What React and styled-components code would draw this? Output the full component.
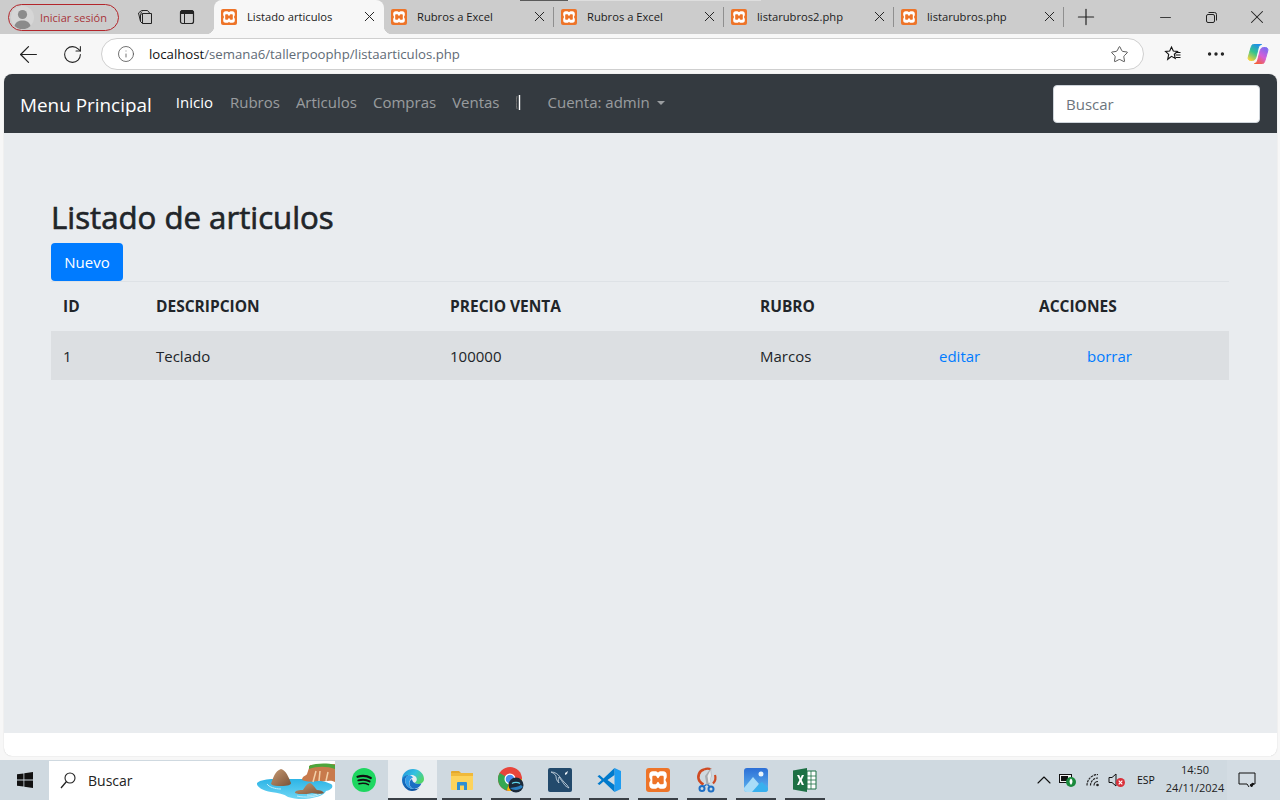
import React from "react";
import styled, { createGlobalStyle } from "styled-components";
import { ArrowLeft, RotateCw, Info, Star, X, Plus, Minus, ChevronUp, Ellipsis } from "lucide-react";

const UI_FONT = `"Open Sans", "Noto Sans", "Liberation Sans", sans-serif`;

const GlobalStyle = createGlobalStyle`
  html, body { margin: 0; padding: 0; height: 100%; }
  body { font-family: ${UI_FONT}; background: #f7f7f7; overflow: hidden; }
  * { box-sizing: border-box; }
`;

const Screen = styled.div`
  width: 1280px;
  height: 800px;
  display: flex;
  flex-direction: column;
  background: #f7f7f7;
`;

/* ---------- tab strip ---------- */
const TabStrip = styled.div`
  position: relative;
  height: 34px;
  flex: none;
  display: flex;
  align-items: center;
  background: #cccccc;
  padding-left: 8px;
`;

const StripIndicator = styled.div`
  position: absolute;
  top: 0;
  left: 520px;
  width: 241px;
  height: 1px;
  background: linear-gradient(to right, #5a5a5a 48px, #dedede 48px);
`;

const ProfileButton = styled.div`
  width: 111px;
  height: 27px;
  flex: none;
  display: flex;
  align-items: center;
  gap: 6px;
  padding-left: 2px;
  border: 1px solid #b3262b;
  border-radius: 14px;
  color: #a8343a;
  font-size: 11px;
  white-space: nowrap;
`;

const Avatar = styled.svg`
  width: 23px;
  height: 23px;
  flex: none;
`;

const StripIcon = styled.div`
  width: 42px;
  height: 34px;
  flex: none;
  display: flex;
  align-items: center;
  justify-content: center;
  margin-left: ${(p) => p.$offset || 0}px;
`;

const Tab = styled.div`
  position: relative;
  width: 170px;
  height: ${(p) => (p.$active ? "34px" : "28px")};
  flex: none;
  display: flex;
  align-items: center;
  padding: 0 6px 1px 7px;
  margin-left: ${(p) => p.$offset || 0}px;
  align-self: ${(p) => (p.$active ? "flex-end" : "center")};
  background: ${(p) => (p.$active ? "#f7f7f7" : "transparent")};
  border-radius: ${(p) => (p.$active ? "8px 8px 0 0" : "0")};
  font-size: 11.2px;
  color: #1c1c1c;
  ${(p) =>
    p.$divider &&
    `&::after {
      content: "";
      position: absolute;
      right: 0;
      top: 4px;
      height: 20px;
      width: 1px;
      background: #8f8f8f;
    }`}
  ${(p) =>
    p.$active &&
    `&::before, &::after {
      content: "";
      position: absolute;
      bottom: 0;
      width: 8px;
      height: 8px;
    }
    &::before {
      left: -8px;
      background: radial-gradient(circle at 0 0, transparent 8px, #f7f7f7 8.5px);
    }
    &::after {
      right: -8px;
      background: radial-gradient(circle at 100% 0, transparent 8px, #f7f7f7 8.5px);
    }`}
`;

const TabTitle = styled.span`
  flex: 1;
  margin-left: 10px;
  white-space: nowrap;
  overflow: hidden;
`;

const TabClose = styled(X)`
  flex: none;
  color: #222;
`;

const NewTab = styled.div`
  width: 44px;
  flex: none;
  display: flex;
  justify-content: center;
  color: #222;
`;

const WindowControls = styled.div`
  margin-left: auto;
  display: flex;
`;

const WindowButton = styled.div`
  width: 46px;
  height: 34px;
  display: flex;
  align-items: center;
  justify-content: center;
  color: #222;
`;

/* ---------- address bar ---------- */
const Toolbar = styled.div`
  height: 40px;
  flex: none;
  display: flex;
  align-items: center;
  background: #f7f7f7;
  padding-left: 6px;
`;

const ToolButton = styled.div`
  width: ${(p) => p.$w || 44}px;
  height: 32px;
  flex: none;
  display: flex;
  align-items: center;
  justify-content: center;
  color: #222;
`;

const AddressBar = styled.div`
  width: 1043px;
  height: 32px;
  flex: none;
  display: flex;
  align-items: center;
  margin-left: 7px;
  padding: 0 14px 0 15px;
  background: #fff;
  border: 1px solid #cfcfcf;
  border-radius: 16px;
  font-size: 13.2px;
`;

const Url = styled.div`
  flex: 1;
  margin-left: 14px;
  color: #5f6b76;
  white-space: nowrap;
  b { font-weight: 400; color: #111; }
`;

const ToolGroup = styled.div`
  display: flex;
  align-items: center;
  margin-left: 7px;
`;

/* ---------- page ---------- */
const Page = styled.div`
  margin: 0 3px 0 4px;
  height: 682px;
  flex: none;
  display: flex;
  flex-direction: column;
  background: #fff;
  border-radius: 8px;
  overflow: hidden;
  box-shadow: 0 0 1px #bbb;
`;

const Navbar = styled.nav`
  height: 59px;
  flex: none;
  display: flex;
  align-items: center;
  background: #343a40;
  padding: 0 17px 0 16px;
`;

const Brand = styled.div`
  font-size: 18.9px;
  color: #fff;
  margin: 2px 24px 0 0;
  white-space: nowrap;
`;

const NavLink = styled.a`
  font-size: 15px;
  color: ${(p) => (p.$active ? "#fff" : "rgba(255,255,255,.5)")};
  margin-right: ${(p) => (p.$active ? 17 : 16)}px;
  margin-top: -3px;
  white-space: nowrap;
`;

const Sliver = styled.svg`
  width: 5px;
  height: 15px;
  margin: -2px 27px 0 0;
  flex: none;
`;

const Caret = styled.span`
  display: inline-block;
  margin-left: 7px;
  vertical-align: 3px;
  border-top: 4.8px solid;
  border-left: 4.8px solid transparent;
  border-right: 4.8px solid transparent;
`;

const SearchInput = styled.div`
  width: 207px;
  height: 38px;
  margin-left: auto;
  display: flex;
  align-items: center;
  padding-left: 12px;
  background: #fff;
  border: 1px solid #ced4da;
  border-radius: 4px;
  color: #6c757d;
  font-size: 15px;
`;

const Content = styled.main`
  height: 600px;
  flex: none;
  background: #e9ecef;
  padding: 65px 47px 0;
`;

const Heading = styled.h2`
  margin: 0 0 6px;
  font-size: 31.2px;
  line-height: 39px;
  font-weight: 400;
  -webkit-text-stroke: 0.65px #212529;
  color: #212529;
`;

const PrimaryButton = styled.button`
  display: block;
  width: 72px;
  height: 38px;
  padding: 0;
  border: 0;
  border-radius: 4px;
  background: #007bff;
  color: #fff;
  font-family: inherit;
  font-size: 15px;
`;

const Table = styled.table`
  width: 1178px;
  table-layout: fixed;
  border-collapse: collapse;
  color: #212529;
  font-size: 15px;
`;

const Th = styled.th`
  height: 49px;
  padding: 0 12px 0;
  text-align: left;
  font-size: 15.5px;
  font-weight: 700;
  border-top: 1px solid #dee2e6;
  white-space: nowrap;
`;

const Tr = styled.tr`
  background: #dcdfe2;
`;

const Td = styled.td`
  height: 49px;
  padding: 1px 12px 0 ${(p) => p.$indent || 12}px;
  white-space: nowrap;
`;

const ActionLink = styled.a`
  color: #007bff;
`;

/* ---------- taskbar ---------- */
const Taskbar = styled.div`
  margin-top: 4px;
  height: 40px;
  flex: none;
  display: flex;
  align-items: stretch;
  background: #cfd9e0;
`;

const StartButton = styled.div`
  width: 49px;
  flex: none;
  display: flex;
  align-items: center;
  justify-content: center;
`;

const TaskSearch = styled.div`
  position: relative;
  width: 286px;
  flex: none;
  display: flex;
  align-items: center;
  gap: 12px;
  margin-top: 1px;
  padding-left: 11px;
  background: #fff;
  font-size: 14px;
  color: #222;
`;

const SearchArt = styled.svg`
  position: absolute;
  right: 0;
  bottom: 0;
  width: 80px;
  height: 39px;
`;

const TaskIcons = styled.div`
  display: flex;
  margin-left: 4px;
`;

const TaskButton = styled.div`
  position: relative;
  width: 49px;
  display: flex;
  align-items: center;
  justify-content: center;
  background: ${(p) => (p.$active ? "#e9edf0" : "transparent")};
  ${(p) =>
    p.$open &&
    `&::after {
      content: "";
      position: absolute;
      bottom: 0;
      height: 2px;
      left: ${p.$active ? 0 : 4.5}px;
      right: ${p.$active ? 0 : 4.5}px;
      background: #3a4046;
    }`}
`;

const Tray = styled.div`
  margin-left: auto;
  display: flex;
  align-items: center;
  color: #111;
`;

const TrayItem = styled.div`
  width: ${(p) => p.$w}px;
  display: flex;
  justify-content: center;
  align-items: center;
  font-size: ${(p) => p.$size || 11}px;
`;

const Clock = styled.div`
  width: 64px;
  margin-top: -2px;
  text-align: center;
  font-size: 11px;
  line-height: 18px;
  color: #222;
`;

const NotifyButton = styled.div`
  width: 53px;
  height: 40px;
  padding-right: 13px;
  display: flex;
  align-items: center;
  justify-content: center;
  background: #d3dce3;
`;

/* ---------- drawn icons ---------- */
const XamppIcon = ({ size = 16 }) => (
  <svg width={size} height={size} viewBox="0 0 16 16">
    <rect width="16" height="16" rx="2" fill="#ee7428" />
    <path
      d="M4.500 2.200h2c.8 0 1 .8 1.500.8s.7-.8 1.500-.8h2c1.300 0 2.300 1 2.300 2.300V6c0 .9-.8 1.200-.8 2s.8 1.100.8 2v1.500c0 1.300-1 2.300-2.300 2.300h-2c-.8 0-1-.8-1.500-.8s-.7.8-1.500.8h-2c-1.300 0-2.300-1-2.300-2.300V10c0-.9.8-1.200.8-2s-.8-1.100-.8-2V4.500c0-1.300 1-2.300 2.300-2.300z"
      fill="#fff"
    />
    <path
      d="M5 5.200h1.400c.7 0 1 1.700 1.600 1.700s.9-1.700 1.600-1.700H11c.5 0 .8.300.8.800v4c0 .5-.3.800-.8.800H9.600c-.7 0-1-1.700-1.600-1.700s-.9 1.700-1.600 1.700H5c-.5 0-.8-.3-.8-.8V6c0-.5.300-.8.800-.8z"
      fill="#ee7428"
    />
  </svg>
);

const WorkspacesIcon = () => (
  <svg width="18" height="18" viewBox="0 0 18 18" fill="none" stroke="#222" strokeWidth="1">
    <path d="M6.500 5.500h9v10h-9z" />
    <path d="M4.500 13.500 2.500 5l3-2.500h6L14 5.500" />
    <path d="M4.500 5.500 6 3.500" />
    <path d="M6.500 15.500l-2-2V6.500l2-1" />
  </svg>
);

const VerticalTabsIcon = () => (
  <svg width="16" height="16" viewBox="0 0 16 16" fill="none" stroke="#222">
    <rect x="1.500" y="1.500" width="13" height="13" rx="2" strokeWidth="1.200" />
    <path d="M1.500 3.500a2 2 0 0 1 2-2h9a2 2 0 0 1 2 2v1h-13z" fill="#222" />
    <path d="M5.500 4.500v10" />
  </svg>
);

const RestoreIcon = () => (
  <svg width="11" height="11" viewBox="0 0 11 11" fill="none" stroke="#222">
    <rect x=".5" y="2.500" width="8" height="8" rx="1.500" />
    <path d="M2.500 .5h6a2 2 0 0 1 2 2v6" />
  </svg>
);

const FavoritesIcon = () => (
  <svg width="18" height="18" viewBox="0 0 18 18" fill="none" stroke="#111" strokeWidth="1.100">
    <path d="M7.500 2 9.300 6l4.200.4-3.200 2.900 1 4.200-3.800-2.200-3.800 3 1-4.900L1.500 6.400 5.700 6z" />
    <path d="M12 7.500h4.500M11.500 10h5M12 12.500h4.500" />
  </svg>
);

const CopilotIcon = () => (
  <svg width="22" height="22" viewBox="0 0 22 22">
    <defs>
      <linearGradient id="cpA" x1="0.7" y1="0" x2="0.2" y2="1">
        <stop offset="0" stopColor="#1d8fe8" />
        <stop offset="0.5" stopColor="#35c48c" />
        <stop offset="1" stopColor="#f2d23a" />
      </linearGradient>
      <linearGradient id="cpB" x1="0.8" y1="0" x2="0.2" y2="1">
        <stop offset="0" stopColor="#7a6cf0" />
        <stop offset="0.5" stopColor="#d45fd8" />
        <stop offset="1" stopColor="#f5603a" />
      </linearGradient>
    </defs>
    <path d="M6.500 1.500h8c-2 .5-2.800 1.700-3.300 3.700L9 14c-.5 2.500-2 3.500-3.500 3.500h-2c-1.800 0-2.800-1.500-2.300-3.200L4 4.500C4.700 2.500 5 1.500 6.500 1.500z" fill="url(#cpA)" stroke="url(#cpA)" />
    <path d="M15.500 20.500h-8c2-.5 2.800-1.700 3.300-3.700L13 8c.5-2.500 2-3.500 3.500-3.500h2c1.800 0 2.800 1.500 2.300 3.200L18 17.500c-.7 2-1 3-2.500 3z" fill="url(#cpB)" stroke="url(#cpB)" />
  </svg>
);

const WindowsLogo = () => (
  <svg width="16" height="16" viewBox="0 0 16 16" fill="#111">
    <path d="M0 2.300 6.500 1.400v6.200H0zM7.300 1.300 16 0v7.600H7.300zM0 8.400h6.500v6.200L0 13.700zM7.300 8.400H16V16l-8.700-1.200z" />
  </svg>
);

const TaskSearchIcon = () => (
  <svg width="16" height="17" viewBox="0 0 16 17" fill="none" stroke="#222" strokeWidth="1.100">
    <circle cx="10" cy="6" r="5" />
    <path d="M6.500 9.500 1 16" strokeWidth="1.300" />
  </svg>
);

const IslandArt = () => (
  <SearchArt viewBox="0 0 80 39">
    <defs>
      <linearGradient id="water" x1="0" y1="0" x2="0" y2="1">
        <stop offset="0" stopColor="#2cb4e6" />
        <stop offset="1" stopColor="#6fd6f4" />
      </linearGradient>
      <linearGradient id="rock" x1="0" y1="0" x2="1" y2="1">
        <stop offset="0" stopColor="#c89a72" />
        <stop offset="1" stopColor="#7a5238" />
      </linearGradient>
    </defs>
    <path d="M2 22c3-3 11-4 16-4h28c10 0 22 1 30 5 3 2 1 6-5 7-2 4-8 6-14 7-8 2-18 1-24-1-4-3-10-4-17-5C9 30 1 26 2 22z" fill="url(#water)" />
    <path d="M12 23c2 3 8 5 14 5M42 35c8 2 18 1 24-2M52 34c4 .5 8 0 10-1" stroke="#c4eefa" fill="none" />
    <path d="M16 23c2-6 4-13 10-15 5 1 8 9 10 14 0 2-3 3-10 3-4 0-8 0-10-2z" fill="url(#rock)" />
    <path d="M47 19c0-4 4-4 5-6l3-9 25-1v18c-5-3-9 0-14-1-6 0-12 2-19-1z" fill="#c87a4c" />
    <path d="M54 5c8-3 18-3 26-1v4C72 5 62 5 54 8z" fill="#4ea53c" />
    <path d="M58 21l3-11M64 20l1-10M71 20l2-9" stroke="#f2cfa8" strokeWidth="1.500" />
    <path d="M40 32c0-3 5-3 8-3 2-3 4-7 7-7 3 1 5 5 7 7 3 0 6 1 7 3-1 1-8 1-12 0-3 1-8 1-9 1-3 0-6 0-8-1z" fill="url(#rock)" />
  </SearchArt>
);

const SpotifyIcon = () => (
  <svg width="24" height="24" viewBox="0 0 24 24">
    <circle cx="12" cy="12" r="12" fill="#1ed760" />
    <g fill="none" stroke="#111" strokeLinecap="round">
      <path d="M5.500 8.800c4.500-1.300 9.500-1 13.300 1.200" strokeWidth="2.200" />
      <path d="M6.300 12.400c4-1.100 8.200-.8 11.300 1" strokeWidth="1.900" />
      <path d="M7 15.700c3.300-.8 6.800-.6 9.500.9" strokeWidth="1.500" />
    </g>
  </svg>
);

const EdgeIcon = () => (
  <svg width="24" height="24" viewBox="0 0 24 24">
    <defs>
      <linearGradient id="edgeA" x1="0" y1="0" x2="1" y2="0.6">
        <stop offset="0" stopColor="#1f8fdc" />
        <stop offset="0.55" stopColor="#35c1e0" />
        <stop offset="1" stopColor="#52d66a" />
      </linearGradient>
      <linearGradient id="edgeB" x1="0" y1="0" x2="1" y2="1">
        <stop offset="0" stopColor="#1a78cc" />
        <stop offset="1" stopColor="#0c4c96" />
      </linearGradient>
    </defs>
    <path d="M1 12C1 5 6 1 12 1c6 0 11 4.500 11 10 0 3.500-3 5-5.500 5-2 0-3.500-.5-4-1.200 1.500-.8 2.300-2 2.300-3.300 0-2.800-2.500-4.500-5.300-4.500C6 7 1 9 1 12z" fill="url(#edgeA)" />
    <path d="M1 12c0-3.500 4-5 7-5-2.500 1-3.800 3.300-3.800 5.700 0 5 4.500 8.500 9 8.300 2 0 3.800-.5 5.300-1.300-2 2-4.500 3.300-7.500 3.300C6 23 1 18 1 12z" fill="url(#edgeB)" />
    <path d="M8 7c-2.500 1-3.800 3.300-3.800 5.700 0 5 4.500 8.500 9 8.300-3-.5-5-3-5-5.800 0-3 1.800-5 3.800-5.700C11 8 9.500 7 8 7z" fill="#2f9be8" />
    <path d="M13.500 14.800c.5.700 2 1.200 4 1.200 1 0 2-.2 3-.8-1 2.800-3.500 5.400-7.300 5.800-3-.5-4.700-3-4.700-5.800 0-2 1-3.500 2.500-4.300.2 1.700 1 3 2.500 3.900z" fill="#1a6fc4" />
  </svg>
);

const ExplorerIcon = () => (
  <svg width="24" height="24" viewBox="0 0 24 24">
    <path d="M1 4a1 1 0 0 1 1-1h7l2 2h-10z" fill="#e4a92c" />
    <rect x="1" y="5" width="22" height="5" fill="#f0b93a" />
    <path d="M1 8h22v13a1 1 0 0 1-1 1H2a1 1 0 0 1-1-1z" fill="#fdd35c" />
    <path d="M7 22v-7a1 1 0 0 1 1-1h8a1 1 0 0 1 1 1v7h-3v-4.500h-4V22z" fill="#2f8fd4" />
  </svg>
);

const ChromeIcon = () => (
  <svg width="26" height="26" viewBox="0 0 26 26">
    <circle cx="12" cy="12" r="12" fill="#e8453c" />
    <path d="M12 12 1.600 6A12 12 0 0 0 9 23.600z" fill="#34a853" />
    <path d="M12 12h12a12 12 0 0 1-15 11.600z" fill="#fbbc05" />
    <circle cx="12" cy="12" r="5.500" fill="#fff" />
    <circle cx="12" cy="12" r="4.300" fill="#4a8df0" />
    <circle cx="18" cy="18" r="7.500" fill="#1b2a3a" />
    <path d="M12 21c3 2.500 9 3 13-1l-2-2c-3 2-7 2-11 3z" fill="#2a7fc0" />
    <path d="M14 16.500c2-1.500 6-1.500 8 0" stroke="#5fd4e8" strokeWidth="1.200" fill="none" />
  </svg>
);

const MysqlIcon = () => (
  <svg width="24" height="24" viewBox="0 0 24 24">
    <rect width="24" height="24" rx="2" fill="#234a6c" />
    <path
      d="M3 4c4 0 7 2 9 5 2 3 4 5 7 8 1 1 1 2 2 3-2-1-4-2-5-4-2-2-3-5-5-7-1 2-1 4 0 6-2-2-3-4-3-7C7 6 5 5 3 4z"
      fill="none"
      stroke="#cfdce6"
      strokeWidth=".8"
    />
    <path d="M17 5l3-2-1 3-2 1z" fill="#e8eef3" />
  </svg>
);

const VscodeIcon = () => (
  <svg width="24" height="24" viewBox="0 0 24 24">
    <path d="M17.500 0 24 3v18l-6.500 3z" fill="#1f9cf0" />
    <path d="M17.500 0 6.500 10.500 2.500 7 .5 8.300 4.700 12 .5 15.700l2 1.300 4-3.500L17.500 24V17L10.500 12l7-5z" fill="#007acc" />
  </svg>
);

const SnipIcon = () => (
  <svg width="24" height="26" viewBox="0 0 24 26" fill="none">
    <path d="M9 2.500C4 3.500 2 9.500 4.500 14c1 1.500 2.500 2.800 4 3.500" stroke="#cf4a22" strokeWidth="2.600" />
    <path d="M9 2.500c2.500-1 5-1 7 0" stroke="#cf4a22" strokeWidth="2.200" />
    <path d="M20 8c1 3 .5 6-2 8.500" stroke="#cf4a22" strokeWidth="2.200" />
    <path d="M16 1l-6 8 1.500 9 3-1 2-8z" fill="#a8acb0" />
    <path d="M15.500 3l-3 6 1 7 1.500-.5 1-7z" fill="#e8eaec" />
    <circle cx="7" cy="21.500" r="2.500" stroke="#1f6fc4" strokeWidth="2" />
    <circle cx="16" cy="22" r="2.500" stroke="#1f6fc4" strokeWidth="2" />
    <path d="M8.500 19.500l3-2M14.500 19.500l-2-2" stroke="#1f6fc4" strokeWidth="1.500" />
  </svg>
);

const PhotosIcon = () => (
  <svg width="24" height="24" viewBox="0 0 24 24">
    <defs>
      <linearGradient id="photoBg" x1="0" y1="0" x2="0" y2="1">
        <stop offset="0" stopColor="#2c6fd6" />
        <stop offset="1" stopColor="#5fb6f0" />
      </linearGradient>
    </defs>
    <rect width="24" height="24" rx="3" fill="url(#photoBg)" />
    <circle cx="17" cy="6" r="2.500" fill="#e8f4fc" />
    <path d="M0 20 9 9l6 7-4 8H3a3 3 0 0 1-3-3z" fill="#a8dcf8" />
    <path d="M8 24l7-8 3-2 6 6v1a3 3 0 0 1-3 3z" fill="#38b0ee" />
  </svg>
);

const ExcelIcon = () => (
  <svg width="24" height="24" viewBox="0 0 24 24">
    <path d="M14 3h9v18h-9z" fill="#fff" stroke="#1d7044" />
    <path d="M14 8h9M14 12h9M14 16h9M18 3v18" stroke="#1d7044" strokeWidth=".8" />
    <path d="M0 2.500 14 0v24L0 21.500z" fill="#1d7044" />
    <path d="M4 7h2.200l1.300 3 1.400-3H11l-2.300 5 2.300 5H8.800l-1.300-3-1.400 3H4l2.400-5z" fill="#fff" />
  </svg>
);

const BatteryIcon = () => (
  <svg width="18" height="16" viewBox="0 0 18 16">
    <rect x=".5" y="2.500" width="12" height="8" fill="#f2f2f2" stroke="#111" />
    <rect x="2" y="4" width="7" height="5" fill="#111" />
    <circle cx="12" cy="10" r="5" fill="#1a8a3c" />
    <path d="M12 6.500c-2 1.500-2 4 0 6.500 2-2.500 2-5 0-6.500z" fill="#fff" />
  </svg>
);

const WifiIcon = () => (
  <svg width="16" height="16" viewBox="0 0 16 16" fill="none" stroke="#222" strokeWidth="1.200">
    <path d="M9 13.500A4 4 0 0 1 13 9.500" />
    <path d="M5.500 13.500A7.500 7.500 0 0 1 13 6" strokeDasharray="2.400 .8" />
    <path d="M2 13.500A11 11 0 0 1 13 2.500" strokeDasharray="2.400 .8" />
    <circle cx="12.500" cy="13" r="1.300" fill="#222" stroke="none" />
  </svg>
);

const VolumeIcon = () => (
  <svg width="18" height="16" viewBox="0 0 18 16">
    <path d="M1 5.500h3L8 2v12L4 10.500H1z" fill="none" stroke="#111" />
    <circle cx="12.500" cy="10.500" r="4.500" fill="#d9303a" />
    <path d="M10.700 8.700l3.600 3.600M14.300 8.700l-3.600 3.600" stroke="#fff" strokeWidth="1.200" />
  </svg>
);

const NotifyIcon = () => (
  <svg width="18" height="16" viewBox="0 0 18 16" fill="none" stroke="#111">
    <path d="M1 1h16v11h-3M1 1v11h8l2 3" />
    <path d="M12 13l3-2 .6 1-2 3z" fill="#111" />
  </svg>
);

const tabs = [
  { title: "Listado articulos", active: true },
  { title: "Rubros a Excel", divider: true },
  { title: "Rubros a Excel", divider: true },
  { title: "listarubros2.php", divider: true },
  { title: "listarubros.php", divider: true },
];

const navLinks = ["Rubros", "Articulos", "Compras", "Ventas"];

const taskIcons = [
  { id: "explorer", icon: <ExplorerIcon /> },
  { id: "chrome", icon: <ChromeIcon /> },
  { id: "mysql", icon: <MysqlIcon /> },
  { id: "vscode", icon: <VscodeIcon /> },
  { id: "xampp", icon: <XamppIcon size={24} /> },
  { id: "snip", icon: <SnipIcon /> },
  { id: "photos", icon: <PhotosIcon /> },
  { id: "excel", icon: <ExcelIcon /> },
];

export default function App() {
  return (
    <Screen>
      <GlobalStyle />
      <TabStrip>
        <ProfileButton>
          <Avatar viewBox="0 0 23 23">
            <circle cx="11.500" cy="11.500" r="11.500" fill="#d6d6d6" />
            <circle cx="11.500" cy="8.500" r="4.600" fill="#8b8b8b" />
            <path d="M3.500 20c1-4 4-5.500 8-5.500s7 1.500 8 5.500a11.500 11.500 0 0 1-16 0z" fill="#8b8b8b" />
          </Avatar>
          Iniciar sesión
        </ProfileButton>
        <StripIcon $offset={5}>
          <WorkspacesIcon />
        </StripIcon>
        <StripIcon>
          <VerticalTabsIcon />
        </StripIcon>
        {tabs.map((tab, i) => (
          <Tab key={i} $active={tab.active} $divider={tab.divider} $offset={i === 0 ? 6 : 0}>
            <XamppIcon />
            <TabTitle>{tab.title}</TabTitle>
            <TabClose size={17} strokeWidth={1.400} />
          </Tab>
        ))}
        <NewTab>
          <Plus size={26} strokeWidth={1.100} />
        </NewTab>
        <WindowControls>
          <WindowButton>
            <Minus size={17} strokeWidth={1.200} />
          </WindowButton>
          <WindowButton>
            <RestoreIcon />
          </WindowButton>
          <WindowButton>
            <X size={22} strokeWidth={1.100} />
          </WindowButton>
        </WindowControls>
        <StripIndicator />
      </TabStrip>

      <Toolbar>
        <ToolButton>
          <ArrowLeft size={27} strokeWidth={1.100} />
        </ToolButton>
        <ToolButton>
          <RotateCw size={21} strokeWidth={1.200} />
        </ToolButton>
        <AddressBar>
          <Info size={18} strokeWidth={1.100} color="#555" />
          <Url>
            <b>localhost</b>/semana6/tallerpoophp/listaarticulos.php
          </Url>
          <Star size={19} strokeWidth={1.100} color="#444" />
        </AddressBar>
        <ToolGroup>
          <ToolButton $w={43}>
            <FavoritesIcon />
          </ToolButton>
          <ToolButton $w={43}>
            <Ellipsis size={22} strokeWidth={1.700} />
          </ToolButton>
          <ToolButton $w={42}>
            <CopilotIcon />
          </ToolButton>
        </ToolGroup>
      </Toolbar>

      <Page>
        <Navbar>
          <Brand>Menu Principal</Brand>
          <NavLink $active>Inicio</NavLink>
          {navLinks.map((link) => (
            <NavLink key={link}>{link}</NavLink>
          ))}
          <Sliver viewBox="0 0 5 15">
            <path d="M1 1C0 5 0 10 1 14" stroke="#777" fill="none" />
            <path d="M3.500 0v15" stroke="#fff" strokeWidth="1.400" />
          </Sliver>
          <NavLink>
            Cuenta: admin
            <Caret />
          </NavLink>
          <SearchInput>Buscar</SearchInput>
        </Navbar>
        <Content>
          <Heading>Listado de articulos</Heading>
          <PrimaryButton>Nuevo</PrimaryButton>
          <Table>
            <colgroup>
              <col width="93" />
              <col width="294" />
              <col width="310" />
              <col width="179" />
              <col width="100" />
              <col width="202" />
            </colgroup>
            <thead>
              <tr>
                <Th>ID</Th>
                <Th>DESCRIPCION</Th>
                <Th>PRECIO VENTA</Th>
                <Th>RUBRO</Th>
                <Th />
                <Th>ACCIONES</Th>
              </tr>
            </thead>
            <tbody>
              <Tr>
                <Td>1</Td>
                <Td>Teclado</Td>
                <Td>100000</Td>
                <Td>Marcos</Td>
                <Td>
                  <ActionLink>editar</ActionLink>
                </Td>
                <Td $indent={60}>
                  <ActionLink>borrar</ActionLink>
                </Td>
              </Tr>
            </tbody>
          </Table>
        </Content>
      </Page>

      <Taskbar>
        <StartButton>
          <WindowsLogo />
        </StartButton>
        <TaskSearch>
          <TaskSearchIcon />
          Buscar
          <IslandArt />
        </TaskSearch>
        <TaskIcons>
          <TaskButton>
            <SpotifyIcon />
          </TaskButton>
          <TaskButton $active $open>
            <EdgeIcon />
          </TaskButton>
          {taskIcons.map((item) => (
            <TaskButton key={item.id} $open>
              {item.icon}
            </TaskButton>
          ))}
        </TaskIcons>
        <Tray>
          <TrayItem $w={25}>
            <ChevronUp size={24} strokeWidth={1.100} />
          </TrayItem>
          <TrayItem $w={24}>
            <BatteryIcon />
          </TrayItem>
          <TrayItem $w={25}>
            <WifiIcon />
          </TrayItem>
          <TrayItem $w={24}>
            <VolumeIcon />
          </TrayItem>
          <TrayItem $w={34} $size={10.500}>
            ESP
          </TrayItem>
          <Clock>
            14:50
            <br />
            24/11/2024
          </Clock>
          <NotifyButton>
            <NotifyIcon />
          </NotifyButton>
        </Tray>
      </Taskbar>
    </Screen>
  );
}
